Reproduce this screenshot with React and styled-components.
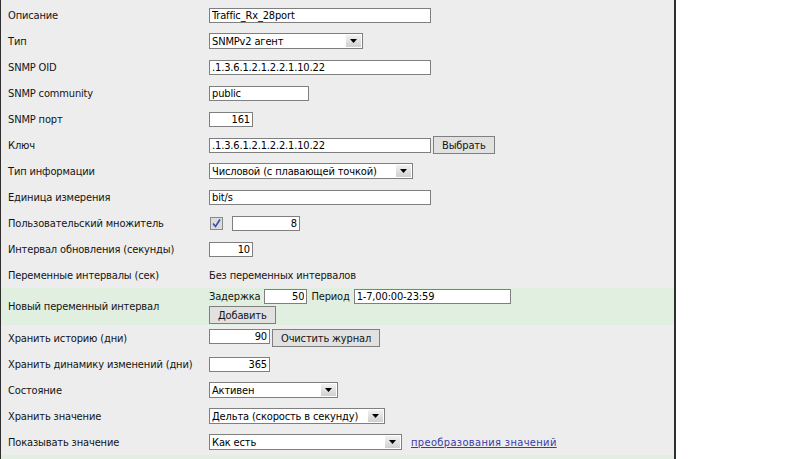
import React from "react"
import styled, { createGlobalStyle } from "styled-components"

const Global = createGlobalStyle`
  html, body {
    margin: 0;
    padding: 0;
    background: #fff;
  }
  body {
    font-family: "DejaVu Sans Condensed", "DejaVu Sans", sans-serif;
    font-stretch: semi-condensed;
    font-size: 11px;
    letter-spacing: -0.15px;
    color: #141414;
  }
`

const Page = styled.div`
  display: flex;
  height: 459px;
  overflow: hidden;
`

const Panel = styled.div`
  width: 673px;
  border-left: 1px solid #2e2e2e;
  border-right: 2px solid #2e2e2e;
  background: #ededed;
  padding-top: 2px;
`

const Row = styled.div`
  display: flex;
  align-items: center;
  min-height: ${(p) => (p.$tall ? 37 : 26)}px;
  background: ${(p) => (p.$accent ? "#e0efe0" : "transparent")};
`

const Label = styled.div`
  flex-shrink: 0;
  box-sizing: border-box;
  width: 208px;
  padding-left: 7px;
`

const Value = styled.div`
  display: flex;
  align-items: ${(p) => (p.$top ? "flex-start" : "center")};
  gap: ${(p) => p.$gap ?? 2}px;
`

const Stack = styled.div`
  display: flex;
  flex-direction: column;
  align-items: flex-start;
  gap: 2px;
`

const Field = styled.input.attrs({ readOnly: true })`
  box-sizing: border-box;
  width: ${(p) => p.$w}px;
  height: 15px;
  padding: 0 2px;
  border: 1px solid #7f7f7f;
  background: #fff;
  font: inherit;
  letter-spacing: inherit;
  color: #000;
  text-align: ${(p) => (p.$right ? "right" : "left")};
  outline: none;
`

const SelectBox = styled.div`
  box-sizing: border-box;
  width: ${(p) => p.$w}px;
  height: 16px;
  padding: 0 1px 0 2px;
  border: 1px solid #7f7f7f;
  background: #fff;
  display: flex;
  align-items: center;
  justify-content: space-between;
  color: #000;
  white-space: nowrap;
`

const Arrow = styled.span`
  flex-shrink: 0;
  width: 15px;
  height: 12px;
  background: linear-gradient(#f2f2f2, #d0d0d0);
  display: flex;
  align-items: center;
  justify-content: center;
`

const Button = styled.button`
  box-sizing: border-box;
  height: 18px;
  padding: 0 ${(p) => p.$pad ?? 8}px;
  border: 1px solid #7f7f7f;
  background: #e1e1e1;
  font: inherit;
  letter-spacing: inherit;
  color: #141414;
  cursor: pointer;
`

const Check = styled.span`
  box-sizing: border-box;
  width: 13px;
  height: 13px;
  margin: 0 9px 0 1px;
  border: 1px solid #8a8a8a;
  background: #dcdcdc;
  display: flex;
  align-items: center;
  justify-content: center;
`

const Note = styled.span`
  color: #141414;
`

const Link = styled.a`
  margin-left: 9px;
  color: #3b3ba6;
  letter-spacing: 0.35px;
  text-decoration: underline;
`

const Select = ({ w, children }) => (
  <SelectBox $w={w}>
    <span>{children}</span>
    <Arrow>
      <svg width="7" height="4" viewBox="0 0 7 4">
        <polygon points="0,0 7,0 3.5,4" fill="#000" />
      </svg>
    </Arrow>
  </SelectBox>
)

const Checkbox = () => (
  <Check>
    <svg width="9" height="9" viewBox="0 0 9 9">
      <path d="M1 4.5 L3.5 7.5 L8 0.5" stroke="#2f4fa8" strokeWidth="1.6" fill="none" />
    </svg>
  </Check>
)

export default function App() {
  return (
    <Page>
      <Global />
      <Panel>
        <Row>
          <Label>Описание</Label>
          <Value>
            <Field $w={222} value="Traffic_Rx_28port" />
          </Value>
        </Row>
        <Row>
          <Label>Тип</Label>
          <Value>
            <Select w={154}>SNMPv2 агент</Select>
          </Value>
        </Row>
        <Row>
          <Label>SNMP OID</Label>
          <Value>
            <Field $w={222} value=".1.3.6.1.2.1.2.2.1.10.22" />
          </Value>
        </Row>
        <Row>
          <Label>SNMP community</Label>
          <Value>
            <Field $w={100} value="public" />
          </Value>
        </Row>
        <Row>
          <Label>SNMP порт</Label>
          <Value>
            <Field $w={44} $right value="161" />
          </Value>
        </Row>
        <Row>
          <Label>Ключ</Label>
          <Value>
            <Field $w={222} value=".1.3.6.1.2.1.2.2.1.10.22" />
            <Button>Выбрать</Button>
          </Value>
        </Row>
        <Row>
          <Label>Тип информации</Label>
          <Value>
            <Select w={204}>Числовой (с плавающей точкой)</Select>
          </Value>
        </Row>
        <Row>
          <Label>Единица измерения</Label>
          <Value>
            <Field $w={222} value="bit/s" />
          </Value>
        </Row>
        <Row>
          <Label>Пользовательский множитель</Label>
          <Value $gap={0}>
            <Checkbox />
            <Field $w={68} $right value="8" />
          </Value>
        </Row>
        <Row>
          <Label>Интервал обновления (секунды)</Label>
          <Value>
            <Field $w={44} $right value="10" />
          </Value>
        </Row>
        <Row>
          <Label>Переменные интервалы (сек)</Label>
          <Value>
            <Note>Без переменных интервалов</Note>
          </Value>
        </Row>
        <Row $accent $tall>
          <Label>Новый переменный интервал</Label>
          <Stack>
            <Value $gap={4}>
              <Note>Задержка</Note>
              <Field $w={43} $right value="50" />
              <Note>Период</Note>
              <Field $w={157} value="1-7,00:00-23:59" />
            </Value>
            <Button>Добавить</Button>
          </Stack>
        </Row>
        <Row>
          <Label>Хранить историю (дни)</Label>
          <Value $top>
            <Field $w={61} $right value="90" />
            <Button>Очистить журнал</Button>
          </Value>
        </Row>
        <Row>
          <Label>Хранить динамику изменений (дни)</Label>
          <Value>
            <Field $w={61} $right value="365" />
          </Value>
        </Row>
        <Row>
          <Label>Состояние</Label>
          <Value>
            <Select w={129}>Активен</Select>
          </Value>
        </Row>
        <Row>
          <Label>Хранить значение</Label>
          <Value>
            <Select w={176}>Дельта (скорость в секунду)</Select>
          </Value>
        </Row>
        <Row>
          <Label>Показывать значение</Label>
          <Value $gap={0}>
            <Select w={193}>Как есть</Select>
            <Link href="#">преобразования значений</Link>
          </Value>
        </Row>
        <Row $accent />
      </Panel>
    </Page>
  )
}
